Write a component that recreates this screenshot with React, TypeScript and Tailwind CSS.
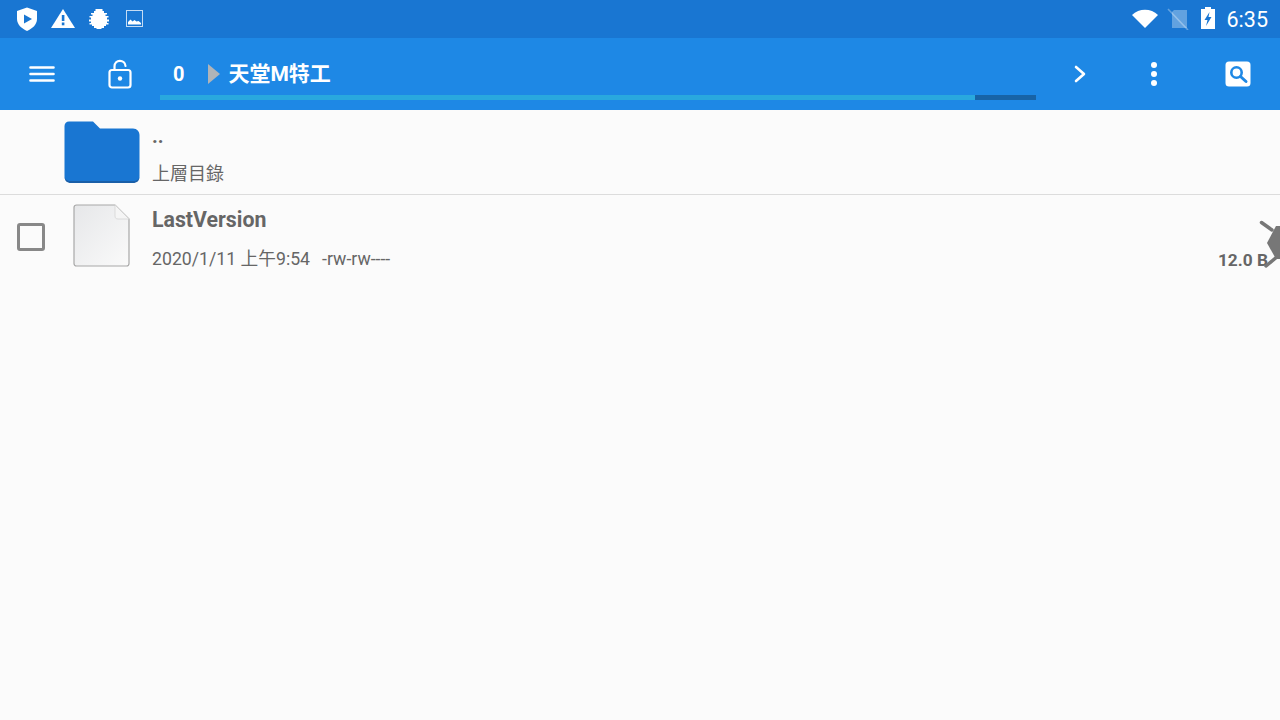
import React from "react";

const FONT = "font-['Roboto','Noto_Sans_CJK_TC',sans-serif]";

const StatusLeftIcons = () => (
  <div className="flex items-center">
    <svg width="24" height="26" viewBox="0 0 24 26" className="ml-[15px]">
      <path d="M12 1.5 L22 5 V13 C22 18.5 17.5 22.5 12 25 C6.5 22.5 2 18.5 2 13 V5 Z" fill="#fff" />
      <path d="M9 8.5 L17 13 L9 17.5 Z" fill="#1976d2" />
    </svg>
    <svg width="24" height="22" viewBox="0 0 24 22" className="ml-[12px]">
      <path d="M12 1 L24 20 H0 Z" fill="#fff" />
      <rect x="10.8" y="7" width="2.6" height="6" fill="#1976d2" />
      <rect x="10.8" y="14.5" width="2.6" height="2.8" fill="#1976d2" />
    </svg>
    <svg width="22" height="22" viewBox="0 0 22 22" className="ml-[13px]">
      <path
        d="M7.5 1 H14.5 V3 H16 V5 H19 V6.5 H17.5 V8 H20.5 V9.5 H19 V11.5 H21 V13.5 H19 V15 H20.5 V16.5 H18 V18 H16 V20 H13.5 V21 H8.5 V20 H6 V18 H4 V16.5 H1.5 V15 H3 V13.5 H1 V11.5 H3 V9.5 H1.5 V8 H4.5 V6.5 H3 V5 H6 V3 H7.5 Z"
        fill="#fff"
      />
    </svg>
    <svg width="20" height="20" viewBox="0 0 20 20" className="ml-[15px]">
      <rect x="1.5" y="1.5" width="16" height="16" fill="none" stroke="#fff" strokeOpacity="0.75" strokeWidth="1" />
      <path d="M3 15.5 V13 L5.5 10.5 L7.5 12.5 L9.5 11 L11.5 12.5 L13.5 12 L16 14 V15.5 Z" fill="#fff" />
    </svg>
  </div>
);

const StatusRightIcons = () => (
  <div className="flex items-center">
    <svg width="28" height="22" viewBox="0 0 28 22" className="mb-[3px]">
      <path d="M1 8 C8 1 20 1 27 8 L14 21 Z" fill="#fff" />
    </svg>
    <svg width="22" height="24" viewBox="0 0 22 24" className="ml-[8px] mb-[3px]">
      <path d="M7 4 H20 V22 H5 V6 Z" fill="#fff" fillOpacity="0.32" />
      <path d="M1 3 L21 24" stroke="#fff" strokeOpacity="0.32" strokeWidth="1.6" />
    </svg>
    <svg width="16" height="24" viewBox="0 0 16 24" className="ml-[11px] mb-[2px]">
      <path d="M5 1 H11 V3 H15 V23 H1 V3 H5 Z" fill="#fff" />
      <path d="M9.5 6 L4.5 14 H7.5 L6 20 L11.5 11 H8.5 Z" fill="#1976d2" />
    </svg>
    <span className="ml-[11px] mt-[1px] text-[21.5px] leading-none text-white">6:35</span>
  </div>
);

const StatusBar = () => (
  <div className="h-[38px] bg-[#1976d2] flex items-center justify-between pr-[12px] shrink-0">
    <StatusLeftIcons />
    <StatusRightIcons />
  </div>
);

const ToolBar = () => (
  <div className="h-[72px] bg-[#1e88e5] flex items-center shrink-0 text-white">
    <svg width="26" height="18" viewBox="0 0 26 18" className="ml-[29px]">
      <path d="M1.5 2.5 H24.5 M1.5 9 H24.5 M1.5 15.5 H24.5" stroke="#fff" strokeWidth="2.6" strokeLinecap="round" />
    </svg>
    <svg width="24" height="30" viewBox="0 0 24 30" className="ml-[53px]">
      <path d="M6.5 11 V7.5 C6.5 0 17 0 17.5 7" fill="none" stroke="#fff" strokeWidth="2.2" strokeLinecap="round" />
      <rect x="1.5" y="11" width="21" height="17.5" rx="2.5" fill="none" stroke="#fff" strokeWidth="2.2" />
      <circle cx="12" cy="19.5" r="2.2" fill="#fff" />
    </svg>
    <div className="ml-[28px] w-[876px] h-full relative flex flex-col">
      <div className="flex items-center h-[57px] pt-[15px]">
        <span className="ml-[13px] text-[20px] font-bold leading-none">0</span>
        <svg width="12" height="20" viewBox="0 0 12 20" className="ml-[24px]">
          <path d="M0 0 L12 10 L0 20 Z" fill="#b0b4b8" />
        </svg>
        <span className="ml-[8px] text-[21px] font-bold leading-none">天堂M特工</span>
      </div>
      <div className="h-[5px] bg-[#1763a6]">
        <div className="h-full bg-[#29a8de] w-[815px]" />
      </div>
    </div>
    <svg width="14" height="18" viewBox="0 0 14 18" className="ml-[37px]">
      <path d="M3 2 L11 9 L3 16" fill="none" stroke="#fff" strokeWidth="2.6" strokeLinecap="round" strokeLinejoin="round" />
    </svg>
    <div className="ml-[64px] flex flex-col gap-[3px]">
      <div className="w-[6px] h-[6px] rounded-full bg-white" />
      <div className="w-[6px] h-[6px] rounded-full bg-white" />
      <div className="w-[6px] h-[6px] rounded-full bg-white" />
    </div>
    <svg width="26" height="26" viewBox="0 0 26 26" className="ml-[68px] mb-[1px]">
      <rect x="0.5" y="0.5" width="25" height="25" rx="3.5" fill="#fff" />
      <circle cx="11.5" cy="11.5" r="5.2" fill="none" stroke="#1e88e5" strokeWidth="2.6" />
      <path d="M15.5 15.5 L21 20.5" stroke="#1e88e5" strokeWidth="3" strokeLinecap="round" />
    </svg>
  </div>
);

const ParentRow = () => (
  <div className="h-[85px] border-b border-[#dcdcdc] flex shrink-0">
    <svg width="78" height="66" viewBox="0 0 78 66" className="ml-[63px] mt-[11px] shrink-0">
      <path
        d="M6 0.5 H30 L37 7.5 H70 C74 7.5 76.5 10.5 76.5 14 V55 C76.5 59 74 61 70 61 H8 C4 61 1.5 59 1.5 55 V5 C1.5 2.5 3.5 0.5 6 0.5 Z"
        fill="#1976d2"
      />
      <path d="M1.5 55 C1.5 60 4 62 8 62 H70 C74 62 76.5 60 76.5 55 C76.5 58 74 60 70 60 H8 C4 60 1.5 58 1.5 55 Z" fill="#1a5fa8" />
    </svg>
    <div className="ml-[11px] flex flex-col text-[#666]">
      <span className="mt-[14px] h-[24px] text-[20px] font-bold leading-[24px]">..</span>
      <span className="mt-[14px] text-[18px] leading-[24px]">上層目錄</span>
    </div>
  </div>
);

const FileRow = () => (
  <div className="h-[85px] flex relative shrink-0 overflow-hidden">
    <div className="ml-[17px] mt-[28px] w-[28px] h-[28px] rounded-[3px] border-[3px] border-[#888] shrink-0" />
    <svg width="57" height="64" viewBox="0 0 57 64" className="ml-[28px] mt-[9px] shrink-0">
      <defs>
        <linearGradient id="sheet" x1="0" y1="0" x2="1" y2="1">
          <stop offset="0" stopColor="#e6e7e9" />
          <stop offset="1" stopColor="#fafafa" />
        </linearGradient>
      </defs>
      <path
        d="M3.5 1 H42 L56 15 V59.5 C56 61 55 62 53.5 62 H3.5 C2 62 1 61 1 59.5 V3.5 C1 2 2 1 3.5 1 Z"
        fill="url(#sheet)"
        stroke="#a8a8a8"
        strokeWidth="1.2"
      />
      <path d="M42 1 L56 15 H45 C43 15 42 14 42 12 Z" fill="#f5f5f5" stroke="#d4d4d4" strokeWidth="0.8" />
    </svg>
    <div className="ml-[22px] flex flex-col text-[#666]">
      <span className="mt-[12px] text-[21.3px] font-bold leading-[26px]">LastVersion</span>
      <div className="mt-[14px] flex text-[17.7px] leading-[24px]">
        <span>2020/1/11 上午9:54</span>
        <span className="ml-[12px]">-rw-rw----</span>
      </div>
    </div>
    <span className="absolute right-[12px] top-[53px] text-[#666] text-[17.3px] font-bold leading-[24px]">12.0 B</span>
    {/* clipped by the right edge of the screen */}
    <svg width="24" height="50" viewBox="0 0 24 50" className="absolute left-[1258px] top-[24px]">
      <path d="M3.5 3.5 L14 11 M20 37 L8 47" stroke="#777" strokeWidth="3.5" strokeLinecap="round" />
      <path d="M18 7 L30 7 L30 40 L18 40 L9 24 Z" fill="#777" />
    </svg>
  </div>
);

export default function App() {
  return (
    <div className={`w-[1280px] h-[720px] overflow-hidden bg-[#fbfbfb] flex flex-col ${FONT}`}>
      <StatusBar />
      <ToolBar />
      <ParentRow />
      <FileRow />
    </div>
  );
}
